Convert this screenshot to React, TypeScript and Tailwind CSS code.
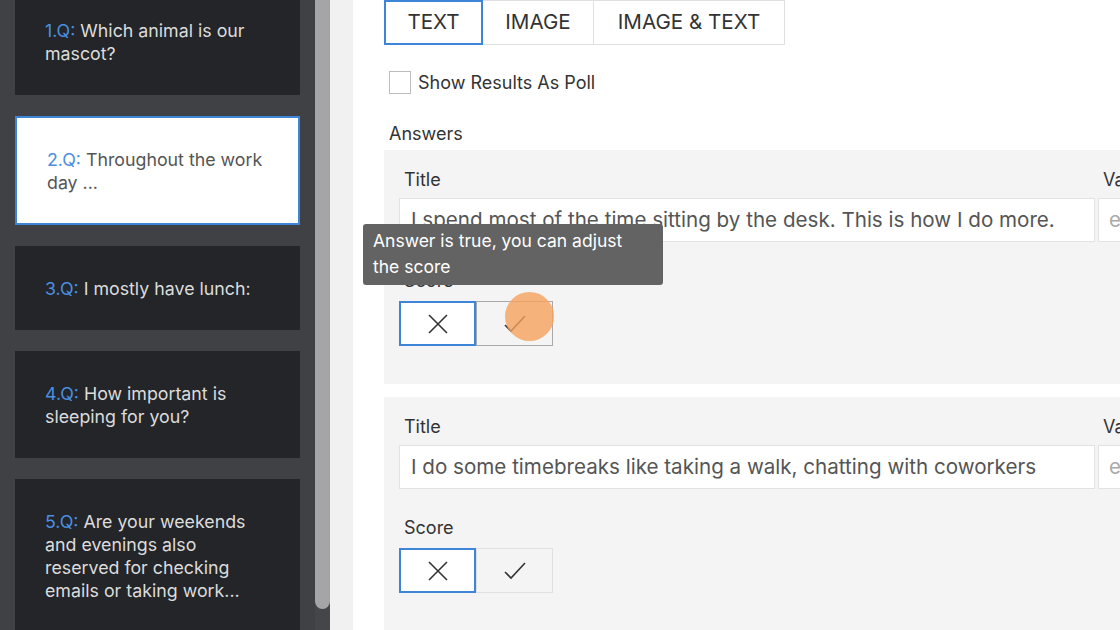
import React from "react";

const font = { fontFamily: "Inter, 'Noto Sans', sans-serif" };

function QCard({ n, text, active }: { n: number; text: string; active?: boolean }) {
  return (
    <div
      className={
        active
          ? "w-[285px] shrink-0 bg-white border-2 border-[#3d85d8] px-[30px] py-[29.5px] text-[17.8px] leading-[23px] text-[#555]"
          : "w-[285px] shrink-0 bg-[#232529] px-[30px] py-[30.5px] text-[17.8px] leading-[23px] text-[#dcdcdc]"
      }
    >
      <span className="text-[#4a8fe0]">{n}.Q: </span>
      {text}
    </div>
  );
}

function XIcon() {
  return (
    <svg width="22" height="22" viewBox="0 0 22 22" fill="none" stroke="#333" strokeWidth="1.6">
      <path d="M2 2 L20 20 M20 2 L2 20" />
    </svg>
  );
}
function CheckIcon() {
  return (
    <svg width="24" height="20" viewBox="0 0 24 20" fill="none" stroke="#333" strokeWidth="1.6">
      <path d="M2 11 L8 17 L22 2" />
    </svg>
  );
}

function AnswerPanel({ text, hover }: { text: string; hover?: boolean }) {
  return (
    <div className="bg-[#f4f4f4] pl-[15px] pt-[18px] pb-[38px] relative w-[900px]">
      <div className="flex">
        <div className="w-[696px] shrink-0 flex flex-col">
          <div className="text-[18px] leading-[24px] text-[#333] pl-[5px]">Title</div>
          <div className="mt-[6px] h-[44px] bg-white border border-[#e2e2e2] flex items-center pl-[11px] text-[20.6px] text-[#555] whitespace-nowrap overflow-hidden">
            {text}
          </div>
        </div>
        <div className="ml-[3px] shrink-0 flex flex-col">
          <div className="text-[18px] leading-[24px] text-[#333] pl-[5px]">Value</div>
          <div className="mt-[6px] h-[44px] w-[120px] bg-white border border-[#e2e2e2] flex items-center pl-[10px] text-[20.6px] text-[#aaa]">
            e
          </div>
        </div>
      </div>
      <div className="mt-[27px] text-[18px] leading-[24px] text-[#333] pl-[5px]">Score</div>
      <div className="mt-[8px] flex">
        <div className="w-[77px] h-[45px] bg-white border-2 border-[#3d85d8] flex items-center justify-center">
          <XIcon />
        </div>
        <div
          className={
            hover
              ? "w-[77px] h-[45px] bg-[#f4f4f4] border border-[#a9a9a9] flex items-center justify-center relative"
              : "w-[77px] h-[45px] bg-[#f4f4f4] border border-[#e0e0e0] flex items-center justify-center"
          }
        >
          <CheckIcon />
          {hover && (
            <div className="absolute left-[28px] top-[-10px] w-[49px] h-[49px] rounded-full bg-[#f5a25c]/80" />
          )}
        </div>
      </div>
    </div>
  );
}

export default function App() {
  return (
    <div className="w-[1120px] h-[630px] overflow-hidden flex bg-white relative" style={font}>
      {/* sidebar */}
      <div className="w-[315px] shrink-0 h-full bg-[#404145] pl-[15px] overflow-hidden">
        <div className="-mt-[12px] flex flex-col gap-[21px]">
          <QCard n={1} text="Which animal is our mascot?" />
          <QCard n={2} text="Throughout the work day ..." active />
          <QCard n={3} text="I mostly have lunch:" />
          <QCard n={4} text="How important is sleeping for you?" />
          <QCard n={5} text="Are your weekends and evenings also reserved for checking emails or taking work..." />
        </div>
      </div>
      {/* scrollbar */}
      <div className="w-[15px] shrink-0 h-full bg-[#45464a] flex flex-col">
        <div className="w-[15px] h-[609px] bg-[#a5a5a8] rounded-b-full" />
      </div>
      {/* light strip */}
      <div className="w-[23px] shrink-0 h-full bg-[#f1f1f1]" />
      {/* main */}
      <div className="flex-1 min-w-0 h-full pl-[31px] overflow-hidden">
        <div className="flex h-[45px]">
          <div className="w-[99px] h-[45px] border-2 border-[#3d85d8] flex items-center justify-center text-[20.6px] text-[#333]">
            TEXT
          </div>
          <div className="w-[111px] h-[45px] border border-l-0 border-[#e0e0e0] flex items-center justify-center text-[20.6px] text-[#333]">
            IMAGE
          </div>
          <div className="w-[191px] h-[45px] border border-l-0 border-[#e0e0e0] flex items-center justify-center text-[20.6px] text-[#333]">
            IMAGE &amp; TEXT
          </div>
        </div>
        <div className="mt-[24px] ml-[5px] flex items-center gap-[7px]">
          <div className="w-[22px] h-[23px] bg-white border border-[#bdbdbd]" />
          <span className="text-[18px] text-[#333]">Show Results As Poll</span>
        </div>
        <div className="mt-[26px] ml-[5px] text-[18px] leading-[24px] text-[#333]">Answers</div>
        <div className="mt-[4px] flex flex-col gap-[13px]">
          <AnswerPanel text="I spend most of the time sitting by the desk. This is how I do more." hover />
          <AnswerPanel text="I do some timebreaks like taking a walk, chatting with coworkers" />
        </div>
      </div>
      {/* tooltip */}
      <div className="absolute left-[363px] top-[224px] w-[300px] h-[61px] bg-[#636363] rounded-[3px] px-[10px] pt-[4px] text-[17.5px] leading-[26px] text-white">
        Answer is true, you can adjust the score
      </div>
    </div>
  );
}
